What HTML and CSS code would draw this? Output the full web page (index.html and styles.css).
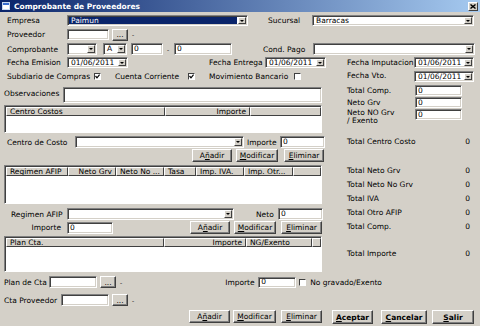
FILE: index.html
```html
<!DOCTYPE html>
<html lang="es">

<head>
  <meta charset="UTF-8">
  <title>Comprobante de Proveedores</title>
  <link rel="stylesheet" href="styles.css">
</head>

<body>
  <div class="window">
    <div class="titlebar">
      <svg class="app-icon" width="8" height="8" viewBox="0 0 8 8">
        <rect x="0.5" y="0.5" width="7" height="7" fill="#fff" stroke="#c8d8f0"/>
        <rect x="1" y="1" width="6" height="2" fill="#3a6ed0"/>
      </svg>
      <span class="title">Comprobante de Proveedores</span>
      <span class="close-btn">
        <svg width="6" height="5" viewBox="0 0 6 5">
          <path d="M0.5 0.5 L5.5 4.5 M5.5 0.5 L0.5 4.5" stroke="#000" stroke-width="1.4"/>
        </svg>
      </span>
    </div>

    <div class="form">
      <!-- cabecera -->
      <div class="row top r1">
        <span class="lbl lbl-main">Empresa</span>
        <div class="combo combo-empresa"><span class="combo-text selected">Paimun</span><span class="arrow"></span></div>
        <span class="lbl lbl-sucursal">Sucursal</span>
        <div class="combo combo-wide"><span class="combo-text">Barracas</span><span class="arrow"></span></div>
      </div>

      <div class="row top r2">
        <span class="lbl lbl-main">Proveedor</span>
        <div class="field field-prov"></div>
        <span class="btn dots">...</span>
        <span class="dash">-</span>
      </div>

      <div class="row top r3">
        <span class="lbl lbl-main">Comprobante</span>
        <div class="combo combo-tipo"><span class="combo-text"></span><span class="arrow"></span></div>
        <div class="combo combo-letra"><span class="combo-text">A</span><span class="arrow"></span></div>
        <div class="field field-pto">0</div>
        <span class="dash dash-num">-</span>
        <div class="field field-nro">0</div>
        <span class="lbl lbl-cond">Cond. Pago</span>
        <div class="combo combo-wide"><span class="combo-text"></span><span class="arrow"></span></div>
      </div>

      <div class="row top r4">
        <span class="lbl lbl-main">Fecha Emision</span>
        <div class="combo date"><span class="combo-text">01/06/2011</span><span class="arrow"></span></div>
        <span class="lbl lbl-entrega">Fecha Entrega</span>
        <div class="combo date"><span class="combo-text">01/06/2011</span><span class="arrow"></span></div>
        <span class="lbl lbl-imput">Fecha Imputacion</span>
        <div class="combo date date-right"><span class="combo-text">01/06/2011</span><span class="arrow"></span></div>
      </div>

      <div class="row top r5">
        <span class="lbl lbl-subdiario">Subdiario de Compras</span>
        <span class="check"><svg width="5" height="5" viewBox="0 0 5 5"><path d="M0.5 2 L2 3.8 L4.6 0.6" fill="none" stroke="#000" stroke-width="1.2"/></svg></span>
        <span class="lbl lbl-cc">Cuenta Corriente</span>
        <span class="check"><svg width="5" height="5" viewBox="0 0 5 5"><path d="M0.5 2 L2 3.8 L4.6 0.6" fill="none" stroke="#000" stroke-width="1.2"/></svg></span>
        <span class="lbl lbl-banco">Movimiento Bancario</span>
        <span class="check"></span>
        <span class="lbl lbl-vto">Fecha Vto.</span>
        <div class="combo date date-right"><span class="combo-text">01/06/2011</span><span class="arrow"></span></div>
      </div>

      <div class="main">
        <div class="col-left">
          <div class="row obs">
            <span class="lbl lbl-obs">Observaciones</span>
            <div class="field field-obs"></div>
          </div>

          <div class="list list-cc">
            <div class="list-head">
              <span class="col cc-name">Centro Costos</span>
              <span class="col cc-imp right">Importe</span>
              <span class="col fill"></span>
            </div>
          </div>

          <div class="row r-cc">
            <span class="lbl lbl-centro">Centro de Costo</span>
            <div class="combo combo-centro"><span class="combo-text"></span><span class="arrow"></span></div>
            <span class="lbl lbl-imp">Importe</span>
            <div class="field field-imp">0</div>
          </div>

          <div class="row btns btns-cc">
            <span class="btn b-add">A<u>ñ</u>adir</span>
            <span class="btn b-mod"><u>M</u>odificar</span>
            <span class="btn b-del"><u>E</u>liminar</span>
          </div>

          <div class="list list-afip">
            <div class="list-head">
              <span class="col af-reg">Regimen AFIP</span>
              <span class="col af-neto right">Neto Grv</span>
              <span class="col af-nng">Neto No ...</span>
              <span class="col af-tasa">Tasa</span>
              <span class="col af-iva">Imp. IVA.</span>
              <span class="col af-otr">Imp. Otr...</span>
              <span class="col fill"></span>
            </div>
          </div>

          <div class="row r-reg">
            <span class="lbl lbl-reg">Regimen AFIP</span>
            <div class="combo combo-reg"><span class="combo-text"></span><span class="arrow"></span></div>
            <span class="lbl lbl-neto">Neto</span>
            <div class="field field-imp">0</div>
          </div>

          <div class="row r-impafip">
            <span class="lbl lbl-impafip">Importe</span>
            <div class="field field-impafip">0</div>
            <span class="btn b-add b-add2">A<u>ñ</u>adir</span>
            <span class="btn b-mod"><u>M</u>odificar</span>
            <span class="btn b-del b-del2"><u>E</u>liminar</span>
          </div>

          <div class="list list-plan">
            <div class="list-head">
              <span class="col pl-name">Plan Cta.</span>
              <span class="col pl-imp right">Importe</span>
              <span class="col pl-ng">NG/Exento</span>
              <span class="col fill"></span>
            </div>
          </div>

          <div class="row r-plan">
            <span class="lbl lbl-plan">Plan de Cta</span>
            <div class="field field-cta"></div>
            <span class="btn dots">...</span>
            <span class="dash">-</span>
            <span class="lbl lbl-plimp">Importe</span>
            <div class="field field-plimp">0</div>
            <span class="check check-ng"></span>
            <span class="lbl lbl-ng">No gravado/Exento</span>
          </div>

          <div class="row r-ctaprov">
            <span class="lbl lbl-ctaprov">Cta Proveedor</span>
            <div class="field field-cta"></div>
            <span class="btn dots">...</span>
            <span class="dash">-</span>
          </div>
        </div>

        <div class="col-right">
          <div class="row sum-row">
            <span class="lbl lbl-sum">Total Comp.</span>
            <div class="field field-sum">0</div>
          </div>
          <div class="row sum-row">
            <span class="lbl lbl-sum">Neto Grv</span>
            <div class="field field-sum">0</div>
          </div>
          <div class="row sum-row sum-exento">
            <span class="lbl lbl-sum">Neto NO Grv<br>/ Exento</span>
            <div class="field field-sum">0</div>
          </div>

          <div class="total total-cc"><span>Total Centro Costo</span><span>0</span></div>

          <div class="totals">
            <div class="total"><span>Total Neto Grv</span><span>0</span></div>
            <div class="total"><span>Total Neto No Grv</span><span>0</span></div>
            <div class="total"><span>Total IVA</span><span>0</span></div>
            <div class="total"><span>Total Otro AFIP</span><span>0</span></div>
            <div class="total"><span>Total Comp.</span><span>0</span></div>
          </div>

          <div class="total total-imp"><span>Total Importe</span><span>0</span></div>
        </div>
      </div>

      <div class="row btns btns-bottom">
        <span class="btn b-add b-add3">A<u>ñ</u>adir</span>
        <span class="btn b-mod b-mod3"><u>M</u>odificar</span>
        <span class="btn b-del b-del2"><u>E</u>liminar</span>
        <span class="btn main-btn b-ok"><u>A</u>ceptar</span>
        <span class="btn main-btn b-cancel"><u>C</u>ancelar</span>
        <span class="btn main-btn b-exit"><u>S</u>alir</span>
      </div>
    </div>
  </div>
</body>

</html>
```

FILE: styles.css
```css
/* Ventana estilo Windows clasico */
* {
  box-sizing: border-box;
}

body {
  margin: 0;
  font-family: 'DejaVu Sans', Tahoma, Verdana, sans-serif;
  font-size: 7.5px;
  color: #000;
  background: #d4d0c8;
}

.window {
  width: 480px;
  height: 326px;
  background: #d4d0c8;
  overflow: hidden;
}

.titlebar {
  display: flex;
  align-items: center;
  height: 12px;
  padding: 0 2px;
  background: linear-gradient(to right, #0a246a, #a6caf0);
  color: #fff;
  font-weight: bold;
  font-size: 7.5px;
}

.app-icon {
  margin-right: 4px;
}

.title {
  flex: 1;
}

.close-btn {
  display: flex;
  align-items: center;
  justify-content: center;
  width: 10px;
  height: 9px;
  background: #d4d0c8;
  border: 1px solid;
  border-color: #fff #404040 #404040 #fff;
}

/* filas */
.row {
  display: flex;
  align-items: center;
  line-height: 9px;
  white-space: nowrap;
}

.top {
  padding-left: 7px;
  height: 11px;
}

.r1 { margin-top: 3px; }
.r2 { margin-top: 3px; }
.r3 { margin-top: 3px; height: 12px; }
.r4 { margin-top: 2px; }
.r5 { margin-top: 3px; }

.lbl {
  flex-shrink: 0;
}

.lbl-main { width: 60px; }
.lbl-sucursal { margin-left: 20px; width: 44px; }
.lbl-cond { margin-left: 31px; width: 50px; }
.lbl-entrega { margin-left: 81px; width: 56px; }
.lbl-imput { margin-left: 21px; width: 67px; }
.lbl-subdiario { width: 87px; }
.lbl-cc { margin-left: 14px; width: 73px; }
.lbl-banco { margin-left: 14px; width: 85px; }
.lbl-vto { margin-left: 46px; width: 67px; margin-top: -3px; }

/* controles */
.field,
.combo {
  height: 100%;
  background: #fff;
  border: 1px solid;
  border-color: #808080 #fff #fff #808080;
  box-shadow: inset 1px 1px 0 #404040, inset -1px -1px 0 #d4d0c8;
  padding: 0 2px;
  line-height: 8px;
  display: flex;
  align-items: center;
  flex-shrink: 0;
}

.combo {
  padding: 1px;
}

.combo-text {
  flex: 1;
  height: 100%;
  padding: 0 2px;
  display: flex;
  align-items: center;
}

.combo-text.selected {
  background: #0a246a;
  color: #fff;
}

.arrow {
  width: 8px;
  height: 100%;
  margin-left: 1px;
  background: #d4d0c8;
  border: 1px solid;
  border-color: #fff #404040 #404040 #fff;
  display: flex;
  align-items: center;
  justify-content: center;
}

.arrow::after {
  content: "";
  border-left: 2px solid transparent;
  border-right: 2px solid transparent;
  border-top: 2px solid #000;
}

.combo-empresa { width: 181px; }
.combo-wide { width: 162px; }
.combo-tipo { width: 30px; }
.combo-letra { width: 24px; margin-left: 6px; }
.field-prov { width: 42px; }
.field-pto { width: 32px; margin-left: 4px; }
.field-nro { width: 58px; margin-left: 4px; }
.date { width: 61px; }
.date-right { width: 60px; }

.dash {
  margin-left: 4px;
  width: 3px;
  font-size: 6px;
}

.dash-num {
  margin-left: 4px;
  margin-right: 0;
}

.check {
  width: 7px;
  height: 7px;
  flex-shrink: 0;
  background: #fff;
  border: 1px solid;
  border-color: #404040 #fff #fff #404040;
  display: flex;
  align-items: center;
  justify-content: center;
}

/* botones */
.btn {
  display: flex;
  align-items: center;
  justify-content: center;
  height: 13px;
  flex-shrink: 0;
  background: #d4d0c8;
  border: 1px solid;
  border-color: #fff #404040 #404040 #fff;
  box-shadow: inset -1px -1px 0 #808080;
  line-height: 9px;
}

.dots {
  width: 16px;
  height: 12px;
  margin-left: 3px;
}

.b-add { width: 40px; }
.b-mod { width: 42px; margin-left: 4px; }
.b-del { width: 40px; margin-left: 6px; }

/* columnas principales */
.main {
  display: flex;
  padding-left: 4px;
  margin-top: 3px;
}

.col-left {
  width: 322px;
  flex-shrink: 0;
}

.col-right {
  width: 127px;
  margin-left: 21px;
  flex-shrink: 0;
}

.obs {
  margin-top: 2px;
  height: 16px;
  align-items: flex-start;
}

.lbl-obs { width: 59px; margin-top: 2px; }
.field-obs { width: 259px; }

/* listas */
.list {
  width: 318px;
  background: #fff;
  border: 1px solid;
  border-color: #808080 #fff #fff #808080;
  box-shadow: inset 1px 1px 0 #404040;
  padding: 1px 0 0 1px;
}

.list-head {
  display: flex;
  height: 9px;
  background: #d4d0c8;
}

.col {
  height: 9px;
  padding: 0 3px;
  line-height: 8px;
  white-space: nowrap;
  overflow: hidden;
  border: 1px solid;
  border-color: #fff #404040 #404040 #fff;
  flex-shrink: 0;
}

.col.right {
  text-align: right;
}

.col.fill {
  flex: 1;
}

.list-cc { margin-top: 2px; height: 28px; }
.cc-name { width: 159px; }
.cc-imp { width: 85px; }

.list-afip { margin-top: 3px; height: 39px; }
.af-reg { width: 62px; }
.af-neto { width: 48px; }
.af-nng { width: 48px; }
.af-tasa { width: 32px; }
.af-iva { width: 48px; }
.af-otr { width: 49px; }

.list-plan { margin-top: 2px; height: 36px; }
.pl-name { width: 158px; }
.pl-imp { width: 82px; }
.pl-ng { width: 66px; }

.r-cc {
  margin-top: 3px;
  height: 12px;
}

.lbl-centro { width: 71px; padding-left: 3px; }
.combo-centro { width: 169px; }
.lbl-imp { width: 33px; margin-left: 3px; }
.field-imp { width: 45px; }

.btns-cc {
  margin-top: 1px;
  padding-left: 188px;
}

.r-reg {
  margin-top: 4px;
  height: 12px;
}

.lbl-reg { width: 63px; padding-left: 7px; }
.combo-reg { width: 167px; }
.lbl-neto { width: 22px; margin-left: 22px; }

.r-impafip {
  margin-top: 1px;
  height: 13px;
}

.lbl-impafip { width: 57px; text-align: right; margin-right: 6px; }
.field-impafip { width: 46px; height: 12px; }
.b-add2 { margin-left: 77px; }
.b-del2 { width: 41px; margin-left: 5px; }

.r-plan {
  margin-top: 4px;
  height: 12px;
}

.lbl-plan { width: 45px; }
.field-cta { width: 48px; }
.lbl-plimp { width: 33px; margin-left: 103px; }
.field-plimp { width: 38px; height: 11px; }
.check-ng { margin-left: 3px; }
.lbl-ng { margin-left: 4px; }

.r-ctaprov {
  margin-top: 6px;
  height: 12px;
}

.lbl-ctaprov { width: 57px; }

/* columna de totales */
.sum-row {
  height: 11px;
  margin-bottom: 1px;
}

.sum-exento {
  align-items: flex-start;
}

.lbl-sum { width: 68px; }
.sum-exento .lbl-sum { line-height: 8px; margin-top: 0; }
.field-sum { width: 47px; }

.total {
  display: flex;
  justify-content: space-between;
  align-items: center;
  height: 14px;
  padding-right: 4px;
  white-space: nowrap;
}

.total-cc { margin-top: 14px; }
.totals { margin-top: 15px; }
.total-imp { margin-top: 13px; }

/* botonera inferior */
.btns-bottom {
  margin-top: 2px;
  padding-left: 189px;
}

.b-add3 { width: 41px; }
.b-mod3 { width: 43px; margin-left: 3px; }

.main-btn {
  font-weight: bold;
  height: 14px;
  margin-top: 2px;
}

.b-ok { width: 41px; margin-left: 10px; }
.b-cancel { width: 46px; margin-left: 8px; }
.b-exit { width: 42px; margin-left: 5px; }
```
